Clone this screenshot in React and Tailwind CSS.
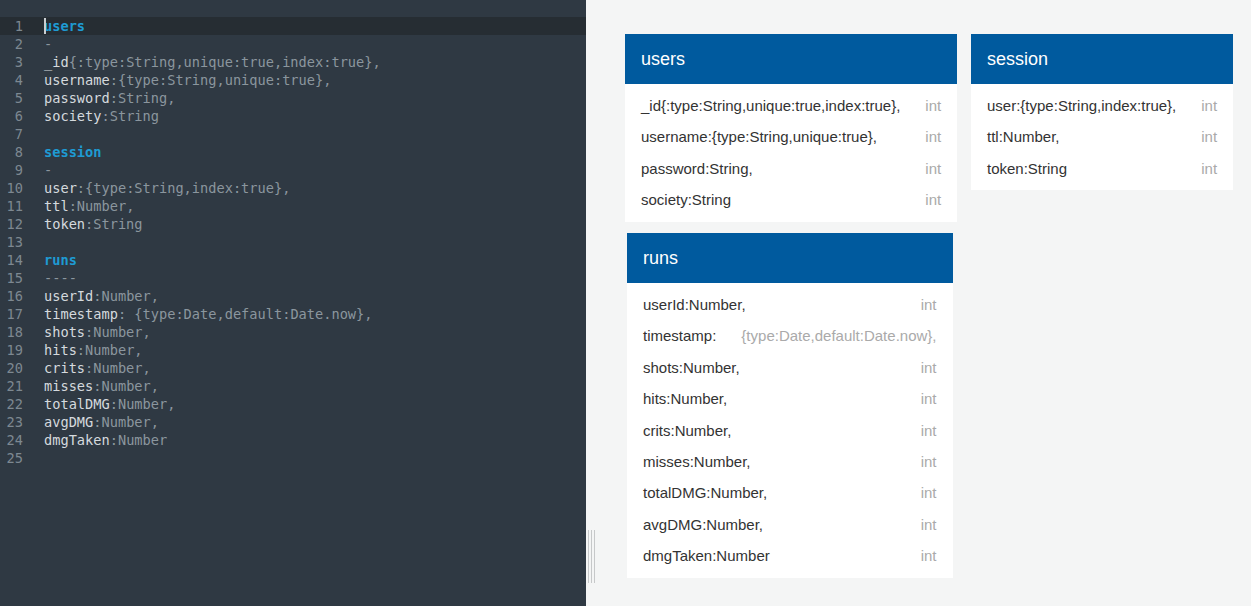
const codeLines = [
  [{ t: 'users', k: 'key' }],
  [{ t: '-', k: 'dim' }],
  [{ t: '_id', k: 'name' }, { t: '{:type:String,unique:true,index:true},', k: 'dim' }],
  [{ t: 'username', k: 'name' }, { t: ':{type:String,unique:true},', k: 'dim' }],
  [{ t: 'password', k: 'name' }, { t: ':String,', k: 'dim' }],
  [{ t: 'society', k: 'name' }, { t: ':String', k: 'dim' }],
  [],
  [{ t: 'session', k: 'key' }],
  [{ t: '-', k: 'dim' }],
  [{ t: 'user', k: 'name' }, { t: ':{type:String,index:true},', k: 'dim' }],
  [{ t: 'ttl', k: 'name' }, { t: ':Number,', k: 'dim' }],
  [{ t: 'token', k: 'name' }, { t: ':String', k: 'dim' }],
  [],
  [{ t: 'runs', k: 'key' }],
  [{ t: '----', k: 'dim' }],
  [{ t: 'userId', k: 'name' }, { t: ':Number,', k: 'dim' }],
  [{ t: 'timestamp', k: 'name' }, { t: ': {type:Date,default:Date.now},', k: 'dim' }],
  [{ t: 'shots', k: 'name' }, { t: ':Number,', k: 'dim' }],
  [{ t: 'hits', k: 'name' }, { t: ':Number,', k: 'dim' }],
  [{ t: 'crits', k: 'name' }, { t: ':Number,', k: 'dim' }],
  [{ t: 'misses', k: 'name' }, { t: ':Number,', k: 'dim' }],
  [{ t: 'totalDMG', k: 'name' }, { t: ':Number,', k: 'dim' }],
  [{ t: 'avgDMG', k: 'name' }, { t: ':Number,', k: 'dim' }],
  [{ t: 'dmgTaken', k: 'name' }, { t: ':Number', k: 'dim' }],
  [],
];

const tokenClass = {
  key: 'font-bold text-[#1e9bd3]',
  name: 'text-[#d5dade]',
  dim: 'text-[#8b969e]',
};

const tables = [
  {
    name: 'users',
    pos: 'left-[39px] top-[34px]',
    rows: [
      ['_id{:type:String,unique:true,index:true},', 'int'],
      ['username:{type:String,unique:true},', 'int'],
      ['password:String,', 'int'],
      ['society:String', 'int'],
    ],
  },
  {
    name: 'session',
    pos: 'left-[385px] top-[34px]',
    rows: [
      ['user:{type:String,index:true},', 'int'],
      ['ttl:Number,', 'int'],
      ['token:String', 'int'],
    ],
  },
  {
    name: 'runs',
    pos: 'left-[41px] top-[233px]',
    rows: [
      ['userId:Number,', 'int'],
      ['timestamp:', '{type:Date,default:Date.now},'],
      ['shots:Number,', 'int'],
      ['hits:Number,', 'int'],
      ['crits:Number,', 'int'],
      ['misses:Number,', 'int'],
      ['totalDMG:Number,', 'int'],
      ['avgDMG:Number,', 'int'],
      ['dmgTaken:Number', 'int'],
    ],
  },
];

function Editor() {
  return (
    <div className="h-full w-[586px] shrink-0 bg-[#2f3943] pt-[17px] font-['DejaVu_Sans_Mono',monospace] text-[13.65px]">
      {codeLines.map((tokens, i) => (
        <div
          key={i}
          className={`flex h-[18px] items-center leading-[18px] ${i === 0 ? 'bg-[#262d33]' : ''}`}
        >
          <span className="w-[23px] text-right text-[#7d8891]">{i + 1}</span>
          <span className="relative ml-[21px] whitespace-pre">
            {i === 0 ? (
              <span className="absolute left-0 top-[1px] h-[16px] w-[2px] bg-[#c9ced2]" />
            ) : null}
            {tokens.map((tok, j) => (
              <span key={j} className={tokenClass[tok.k]}>
                {tok.t}
              </span>
            ))}
          </span>
        </div>
      ))}
    </div>
  );
}

function TableNode({ table }) {
  return (
    <div className={`absolute ${table.pos} w-max bg-white font-['Liberation_Sans',Arial,sans-serif]`}>
      <div className="flex h-[50px] items-center bg-[#005a9e] px-4 text-[18px] text-white">
        {table.name}
      </div>
      <div className="px-4 py-[6px] text-[15px]">
        {table.rows.map(([field, type], i) => (
          <div key={i} className="flex justify-between gap-[25px] py-[5px] leading-[21.4px] whitespace-nowrap">
            <span className="text-[#333333]">{field}</span>
            <span className="text-right text-[#aaaaaa]">{type}</span>
          </div>
        ))}
      </div>
    </div>
  );
}

export default function App() {
  return (
    <div className="flex h-[606px] w-full overflow-hidden">
      <Editor />
      <div className="relative flex-1 bg-[#f4f5f5]">
        <div className="absolute bottom-[23px] left-[2px] flex h-[53px] gap-[2px]">
          <span className="w-px bg-[#c6c8c9]" />
          <span className="w-px bg-[#c6c8c9]" />
          <span className="w-px bg-[#c6c8c9]" />
        </div>
        {tables.map((t) => (
          <TableNode key={t.name} table={t} />
        ))}
      </div>
    </div>
  );
}
